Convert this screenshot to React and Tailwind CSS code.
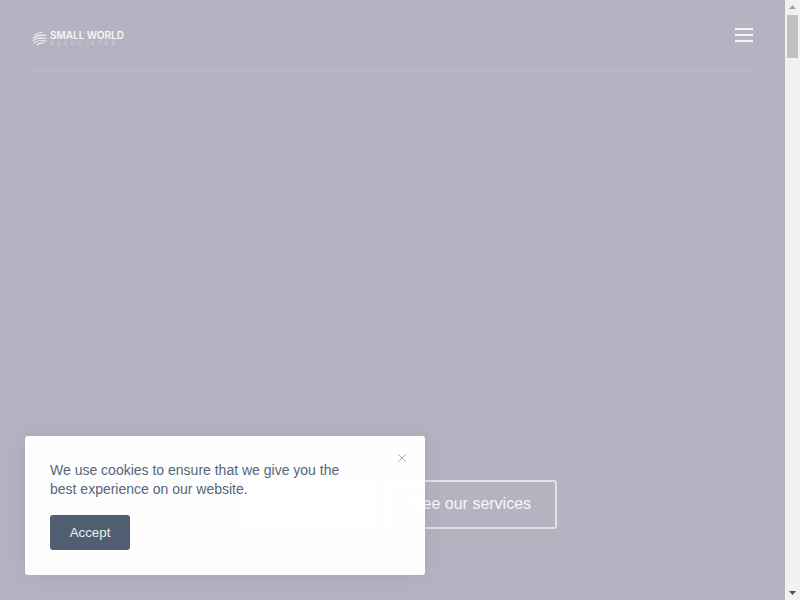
import React from 'react';
import { X } from 'lucide-react';

const Logo = () => (
  <div className="flex items-center gap-[3px] mt-[5px]">
    <svg width="15" height="15" viewBox="0 0 15 15" fill="none" stroke="#fff" strokeLinecap="round" className="opacity-80">
      <path d="M3 4C5 2.500 7 1.500 10 1.500" strokeWidth="1.100" />
      <path d="M1 7C5 4 9 3.500 14 4.500" strokeWidth="1.100" />
      <path d="M1 9.500C5 6.500 10 6.500 14 7.500" strokeWidth="1.100" />
      <path d="M2 12C6 9 10 9 14 10" strokeWidth="1.100" />
      <path d="M5 14C7 12 9 11.500 12 12" strokeWidth="1.100" />
    </svg>
    <div className="flex flex-col w-[74px]">
      <span className="text-[10px] leading-[9px] font-semibold text-white/90 whitespace-nowrap font-['Inter',sans-serif]">SMALL WORLD</span>
      <span className="text-[5px] leading-[6px] text-white/50 whitespace-nowrap tracking-[4px] font-['Open_Sans',sans-serif]">ASSOCIATES</span>
    </div>
  </div>
);

const CookiePopup = () => (
  <div className="absolute left-[25px] bottom-[25px] w-[400px] h-[139px] bg-white/[.98] rounded-[3px] px-[25px] pt-[25px] text-[#55657a] shadow-[0_0_20px_rgba(70,70,110,0.12)]">
    <button className="absolute top-[15px] right-[16px] text-[#9aa3ad]">
      <X size={14} strokeWidth={1.500} />
    </button>
    <p className="text-[14px] leading-[19px] w-[300px]">We use cookies to ensure that we give you the best experience on our website.</p>
    <button className="mt-[16px] w-[80px] h-[35px] bg-[#4f5f71] rounded-[3px] text-white/90 text-[13.3px]">Accept</button>
  </div>
);

export default function App() {
  return (
    <div className="relative h-[600px] overflow-hidden flex font-['Liberation_Sans',sans-serif]">
      <main className="flex-1 bg-[#b4b3c1] flex flex-col px-[32px]">
        <header className="h-[71px] pt-[2px] flex items-center justify-between border-b border-white/10">
          <Logo />
          <div className="flex flex-col gap-[4px] mb-[2px]">
            <span className="block w-[18px] h-[2px] bg-white/85" />
            <span className="block w-[18px] h-[2px] bg-white/85" />
            <span className="block w-[18px] h-[2px] bg-white/85" />
          </div>
        </header>
        <div className="flex gap-[15px] mt-[409px] pl-[214px]">
          <a className="w-[125px] h-[49px] pb-[2px] flex items-center justify-center rounded-[3px] bg-white text-[#b4b3c1] text-[16px]">Contact us</a>
          <a className="w-[171px] h-[49px] pb-[2px] flex items-center justify-center rounded-[3px] border-2 border-white/60 text-white/90 text-[16px]">See our services</a>
        </div>
      </main>
      <aside className="w-[15px] bg-[#f1f1f1] flex flex-col items-center">
        <svg width="15" height="15" viewBox="0 0 15 15"><path d="M4 9 7.500 5 11 9Z" fill="#a3a3a3" /></svg>
        <div className="w-[11px] h-[43px] bg-[#c1c1c1]" />
        <div className="flex-1" />
        <svg width="15" height="15" viewBox="0 0 15 15"><path d="M4 6 7.500 10 11 6Z" fill="#505050" /></svg>
      </aside>
      <CookiePopup />
    </div>
  );
}
